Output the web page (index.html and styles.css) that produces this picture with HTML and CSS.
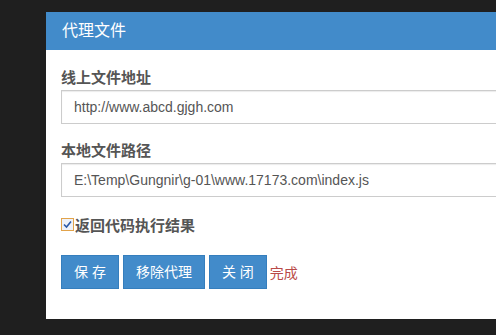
FILE: index.html
```html
<!DOCTYPE html>
<html lang="zh-CN">
<head>
    <meta charset="UTF-8">
    <title>代理文件</title>
    <link rel="stylesheet" href="styles.css">
</head>
<body>

<!-- Proxy dialog -->
<div class="dialog">
    <div class="dialog-header">代理文件</div>

    <div class="dialog-body">
        <div class="field">
            <label class="field-label" for="remote">线上文件地址</label>
            <input id="remote" class="field-input" type="text" value="http://www.abcd.gjgh.com">
        </div>

        <div class="field">
            <label class="field-label" for="local">本地文件路径</label>
            <input id="local" class="field-input" type="text" value="E:\Temp\Gungnir\g-01\www.17173.com\index.js">
        </div>

        <label class="check-row">
            <span class="check-box">
                <svg width="11" height="11" viewBox="0 0 11 11">
                    <path d="M2 5.5 L4.5 8 L9 2.5" fill="none" stroke="#2b59a8" stroke-width="1.6"/>
                </svg>
            </span>
            返回代码执行结果
        </label>

        <div class="actions">
            <button class="btn">保 存</button>
            <button class="btn">移除代理</button>
            <button class="btn">关 闭</button>
            <span class="status">完成</span>
        </div>
    </div>
</div>

</body>
</html>
```

FILE: styles.css
```css
* {
    box-sizing: border-box;
}

html, body {
    overflow: hidden;
}

body {
    margin: 0;
    height: 335px;
    background-color: #1f1f1f;
    font-family: "Liberation Sans", Arial, "Noto Sans CJK SC", sans-serif;
    padding: 12px 0 0 46px;
}

/* Dialog box, cut off by the right edge of the window */
.dialog {
    width: 450px;
    height: 307px;
    background-color: white;
    overflow: hidden;
}

.dialog-header {
    height: 38px;
    line-height: 38px;
    padding-left: 16px;
    background-color: #428bca;
    color: white;
    font-size: 16px;
}

.dialog-body {
    padding: 18px 0 0 15px;
}

.field {
    margin-bottom: 17px;
}

.field-label {
    display: block;
    height: 20px;
    line-height: 20px;
    margin-bottom: 2px;
    font-size: 15px;
    font-weight: bold;
    color: #555;
}

.field-input {
    display: block;
    width: calc(100% + 2px);
    height: 34px;
    padding: 6px 12px;
    border: 1px solid #ccc;
    box-shadow: inset 0 1px 1px rgba(0, 0, 0, 0.08);
    font-family: "Liberation Sans", Arial, sans-serif;
    font-size: 14px;
    color: #555;
    outline: none;
}

/* Checkbox row */
.check-row {
    display: flex;
    align-items: center;
    height: 20px;
    font-size: 15px;
    font-weight: bold;
    color: #555;
}

.check-box {
    display: flex;
    align-items: center;
    justify-content: center;
    width: 13px;
    height: 13px;
    margin-right: 1px;
    border: 1px solid #e2a34a;
    background-color: #eef2fa;
}

/* Buttons */
.actions {
    display: flex;
    align-items: center;
    gap: 4px;
    margin-top: 21px;
}

.btn {
    height: 34px;
    padding: 6px 12px;
    border: 1px solid #357ebd;
    background-color: #428bca;
    color: white;
    font-family: "Liberation Sans", Arial, "Noto Sans CJK SC", sans-serif;
    font-size: 14px;
    line-height: 20px;
}

.status {
    margin-left: -1px;
    font-size: 14px;
    color: #b94a48;
}
```
